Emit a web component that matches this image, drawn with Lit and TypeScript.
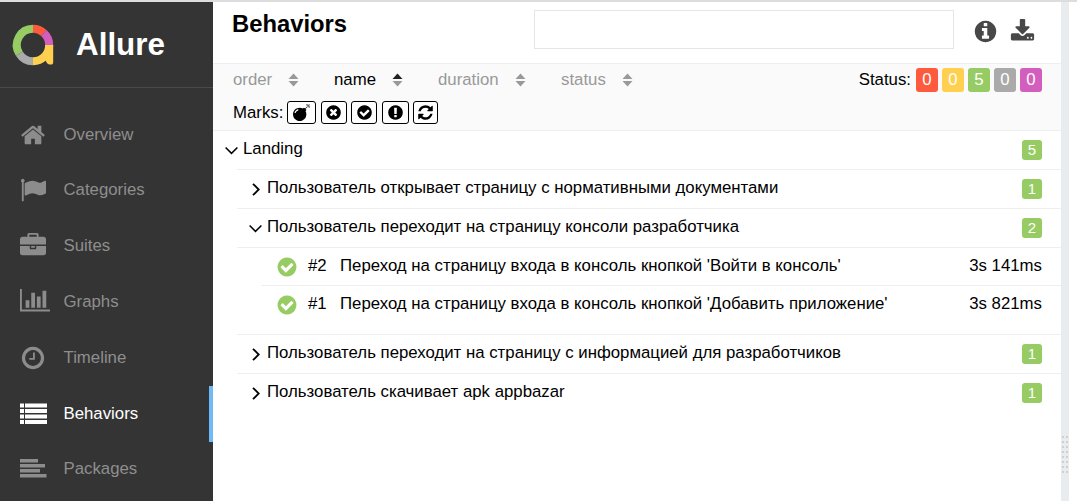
import { LitElement, html, css, svg } from 'lit';
import { customElement } from 'lit/decorators.js';

const FA = {
  home: 'M1472 992v480q0 26-19 45t-45 19h-384v-384h-256v384h-384q-26 0-45-19t-19-45v-480q0-1 .5-3t.5-3l575-474 575 474q1 2 1 6zm223-69l-62 74q-8 9-21 11h-3q-13 0-21-7l-692-577-692 577q-12 8-24 7-13-2-21-11l-62-74q-8-10-7-23.5t11-21.5l719-599q32-26 76-26t76 26l244 204v-195q0-14 9-23t23-9h192q14 0 23 9t9 23v408l219 182q10 8 11 21.5t-7 23.5z',
  flag: 'M320 256q0 72-64 110v1266q0 13-9.5 22.5t-22.5 9.5h-64q-13 0-22.5-9.5t-9.5-22.5v-1266q-64-38-64-110 0-53 37.5-90.5t90.5-37.5 90.5 37.5 37.5 90.5zm1472 64v763q0 25-12.5 38.5t-39.5 27.5q-215 116-369 116-61 0-123.5-22t-108.5-48-115.5-48-142.5-22q-192 0-464 146-17 9-33 9-26 0-45-19t-19-45v-742q0-32 31-55 21-14 79-43 236-120 421-120 107 0 200 29t219 88q38 19 88 19 54 0 117.5-21t110-47 88-47 54.5-21q26 0 45 19t19 45z',
  briefcase: 'M640 256h512v-128h-512v128zm1152 640v480q0 66-47 113t-113 47h-1472q-66 0-113-47t-47-113v-480h672v160q0 26 19 45t45 19h320q26 0 45-19t19-45v-160h672zm-768 0v128h-256v-128h256zm768-480v384h-1792v-384q0-66 47-113t113-47h352v-160q0-40 28-68t68-28h576q40 0 68 28t28 68v160h352q66 0 113 47t47 113z',
  chart: 'M640 896v512h-256v-512h256zm384-512v1024h-256v-1024h256zm1024 1152v128h-2048v-1536h128v1408h1920zm-640-896v768h-256v-768h256zm384-384v1152h-256v-1152h256z',
  clock: 'M1024 544v448q0 14-9 23t-23 9h-320q-14 0-23-9t-9-23v-64q0-14 9-23t23-9h224v-352q0-14 9-23t23-9h64q14 0 23 9t9 23zm416 352q0-148-73-273t-198-198-273-73-273 73-198 198-73 273 73 273 198 198 273 73 273-73 198-198 73-273zm224 0q0 209-103 385.5t-279.5 279.5-385.5 103-385.5-103-279.5-279.5-103-385.5 103-385.5 279.5-279.5 385.5-103 385.5 103 279.5 279.5 103 385.5z',
  info: 'M1152 1376v-160q0-14-9-23t-23-9h-96v-512q0-14-9-23t-23-9h-320q-14 0-23 9t-9 23v160q0 14 9 23t23 9h96v320h-96q-14 0-23 9t-9 23v160q0 14 9 23t23 9h448q14 0 23-9t9-23zm-128-896v-160q0-14-9-23t-23-9h-192q-14 0-23 9t-9 23v160q0 14 9 23t23 9h192q14 0 23-9t9-23zm640 416q0 209-103 385.5t-279.5 279.5-385.5 103-385.5-103-279.5-279.5-103-385.5 103-385.5 279.5-279.5 385.5-103 385.5 103 279.5 279.5 103 385.5z',
  download: 'M1344 1344q0-26-19-45t-45-19-45 19-19 45 19 45 45 19 45-19 19-45zm256 0q0-26-19-45t-45-19-45 19-19 45 19 45 45 19 45-19 19-45zm128-224v320q0 40-28 68t-68 28h-1472q-40 0-68-28t-28-68v-320q0-40 28-68t68-28h465l135 136q58 56 136 56t136-56l136-136h464q40 0 68 28t28 68zm-325-569q17 41-14 70l-448 448q-18 19-45 19t-45-19l-448-448q-31-29-14-70 17-39 59-39h256v-448q0-26 19-45t45-19h256q26 0 45 19t19 45v448h256q42 0 59 39z',
  bomb: 'M571 589q-10-25-34-35t-49 0q-108 44-191 127t-127 191q-10 25 0 49t35 34q13 5 24 5 42 0 60-40 34-84 98.5-148.5t148.5-98.5q25-11 35-35t0-49zm942-356l46 46-244 243 68 68q19 19 19 45.5t-19 45.5l-64 64q89 161 89 343 0 143-55.5 273.5t-150 225-225 150-273.5 55.5-273.5-55.5-225-150-150-225-55.5-273.5 55.5-273.5 150-225 225-150 273.5-55.5q182 0 343 89l64-64q19-19 45.5-19t45.5 19l68 68zm8-56q-10 10-22 10-13 0-23-10l-91-90q-9-10-9-23t9-23q10-9 23-9t23 9l90 91q10 9 10 22.5t-10 22.5zm230 230q-11 9-23 9t-23-9l-90-91q-10-9-10-22.5t10-22.5q9-10 22.5-10t22.5 10l91 90q9 10 9 23t-9 23zm41-183q0 14-9 23t-23 9h-96q-14 0-23-9t-9-23 9-23 23-9h96q14 0 23 9t9 23zm-192-192v96q0 14-9 23t-23 9-23-9-9-23v-96q0-14 9-23t23-9 23 9 9 23zm151 55l-91 90q-10 10-22 10-13 0-23-10-10-9-10-22.5t10-22.5l90-91q10-9 23-9t23 9q9 10 9 23t-9 23z',
  times: 'M1277 1122q0-26-19-45l-181-181 181-181q19-19 19-45 0-27-19-46l-90-90q-19-19-46-19-26 0-45 19l-181 181-181-181q-19-19-45-19-27 0-46 19l-90 90q-19 19-19 46 0 26 19 45l181 181-181 181q-19 19-19 45 0 27 19 46l90 90q19 19 46 19 26 0 45-19l181-181 181 181q19 19 45 19 27 0 46-19l90-90q19-19 19-46zm387-226q0 209-103 385.5t-279.5 279.5-385.5 103-385.5-103-279.5-279.5-103-385.5 103-385.5 279.5-279.5 385.5-103 385.5 103 279.5 279.5 103 385.5z',
  check: 'M1412 734q0-28-18-46l-91-90q-19-19-45-19t-45 19l-408 407-226-226q-19-19-45-19t-45 19l-91 90q-18 18-18 46 0 27 18 45l362 362q19 19 45 19 27 0 46-19l543-543q18-18 18-45zm252 162q0 209-103 385.5t-279.5 279.5-385.5 103-385.5-103-279.5-279.5-103-385.5 103-385.5 279.5-279.5 385.5-103 385.5 103 279.5 279.5 103 385.5z',
  excl: 'M896 128q209 0 385.5 103t279.5 279.5 103 385.5-103 385.5-279.5 279.5-385.5 103-385.5-103-279.5-279.5-103-385.5 103-385.5 279.5-279.5 385.5-103zm128 1247v-190q0-14-9-23.5t-22-9.5h-192q-13 0-23 10t-10 23v190q0 13 10 23t23 10h192q13 0 22-9.5t9-23.5zm-2-344l18-621q0-12-10-18-10-8-24-8h-220q-14 0-24 8-10 6-10 18l17 621q0 10 10 17.5t24 7.5h185q14 0 23.5-7.5t11.5-17.5z',
  refresh: 'M1639 1056q0 5-1 7-64 268-268 434.5t-478 166.5q-146 0-282.5-55t-243.5-157l-129 129q-19 19-45 19t-45-19-19-45v-448q0-26 19-45t45-19h448q26 0 45 19t19 45-19 45l-137 137q71 66 161 102t187 36q134 0 250-65t186-179q11-17 53-117 8-23 30-23h192q13 0 22.5 9.5t9.5 22.5zm25-800v448q0 26-19 45t-45 19h-448q-26 0-45-19t-19-45 19-45l138-138q-148-137-349-137-134 0-250 65t-186 179q-11 17-53 117-8 23-30 23h-199q-13 0-22.5-9.5t-9.5-22.5v-7q65-268 270-434.5t480-166.5q146 0 284 55.5t245 156.5l130-129q19-19 45-19t45 19 19 45z',
  list: 'M0 3.5h4v4H0zM5 3.5h22v4H5zM0 9h4v4H0zM5 9h22v4H5zM0 14.5h4v4H0zM5 14.5h22v4H5zM0 20h4v4H0zM5 20h22v4H5z',
  packages: 'M0 4h18v3.6H0zM0 9h25v3.6H0zM0 14h20v3.6H0zM0 19h26.5v3.6H0z',
};

function icon(d: string, size: number, vb = 1792) {
  return html`<svg class="fa" width=${size} height=${size} viewBox="0 0 ${vb} ${vb}"><path fill="currentColor" d=${d}></path></svg>`;
}

const NAV = [
  { label: 'Overview', d: FA.home, vb: 1792, size: 26 },
  { label: 'Categories', d: FA.flag, vb: 1792, size: 26 },
  { label: 'Suites', d: FA.briefcase, vb: 1792, size: 26 },
  { label: 'Graphs', d: FA.chart, vb: 2048, size: 30 },
  { label: 'Timeline', d: FA.clock, vb: 1792, size: 26 },
  { label: 'Behaviors', d: FA.list, vb: 28, size: 28, active: true },
  { label: 'Packages', d: FA.packages, vb: 28, size: 28 },
];

const SORTS = [
  { label: 'order', w: 101 },
  { label: 'name', w: 104, active: true },
  { label: 'duration', w: 123 },
  { label: 'status', w: 72 },
];

const STATUS = [
  { n: 0, c: '#fd5a3e' },
  { n: 0, c: '#ffd050' },
  { n: 5, c: '#97cc64' },
  { n: 0, c: '#aaaaaa' },
  { n: 0, c: '#d35ebe' },
];

const MARKS = [
  { d: FA.bomb, w: 29 },
  { d: FA.times, w: 26 },
  { d: FA.check, w: 26 },
  { d: FA.excl, w: 27 },
  { d: FA.refresh, w: 25 },
];

const chevDown = html`<svg class="chev" width="13" height="13" viewBox="0 0 13 13"><path d="M0.6 3.5 L6.5 9.4 L12.4 3.5" fill="none" stroke="#000" stroke-width="1.5"></path></svg>`;
const chevRight = html`<svg class="chev" width="13" height="13" viewBox="0 0 13 13"><path d="M4 0.8 L9.7 6.5 L4 12.2" fill="none" stroke="#000" stroke-width="1.8"></path></svg>`;

function ringArc(from: number, to: number, color: string) {
  const r = 16.2;
  const p = (a: number) => {
    const t = ((a - 90) * Math.PI) / 180;
    return `${(33 + r * Math.cos(t)).toFixed(2)} ${(45 + r * Math.sin(t)).toFixed(2)}`;
  };
  return svg`<path d="M${p(from)} A${r} ${r} 0 ${to - from > 180 ? 1 : 0} 1 ${p(to)}" fill="none" stroke=${color} stroke-width="8"></path>`;
}

@customElement('app-root')
export class AppRoot extends LitElement {
  static styles = css`
    :host {
      display: block;
      height: 501px;
      overflow: hidden;
      background: #fff;
      font-family: 'Liberation Sans', Arial, sans-serif;
      font-size: 16.8px;
      color: #000;
    }
    .page {
      display: flex;
      height: 499px;
      border-top: 2px solid #dddddd;
    }
    .fa { display: block; }

    .side {
      width: 213px;
      flex: none;
      background: #343434;
      color: #999;
    }
    .brand {
      display: flex;
      align-items: center;
      height: 85px;
      border-bottom: 1px solid #4a4a4a;
    }
    .logo { display: block; flex: none; }
    .brand-name {
      margin-left: -1px;
      font-size: 31.4px;
      font-weight: bold;
      color: #fff;
    }
    .nav { padding-top: 18.8px; }
    .nav-item {
      display: flex;
      align-items: center;
      height: 55.8px;
      padding-left: 20px;
    }
    .nav-item.active {
      box-shadow: inset -4px 0 0 #6eb9f7;
    }
    .nav-ico {
      width: 32px;
      margin-right: 11.5px;
      flex: none;
      color: #8c8c8c;
    }
    .active .nav-ico { color: #fff; }
    .nav-text { color: #8e8e8e; }
    .active .nav-text { color: #fff; }

    .main { flex: 1; min-width: 0; display: flex; flex-direction: column; }
    .head {
      display: flex;
      height: 61px;
      border-bottom: 1px solid #eeeeee;
      padding-left: 19px;
    }
    h1 {
      margin: 8px 0 0;
      width: 302px;
      font-size: 23.8px;
      line-height: 28px;
      font-weight: bold;
    }
    .search {
      width: 418px;
      height: 37px;
      margin-top: 8px;
      border: 1px solid #e6e6e6;
      flex: none;
    }
    .head-ico { display: flex; margin-left: 19px; margin-top: 17px; gap: 12px; color: #484848; }

    .bar {
      height: 67px;
      border-bottom: 1px solid #eeeeee;
      background: #fafafa;
      padding: 0 19px 0 20px;
      box-sizing: border-box;
    }
    .bar-top { display: flex; height: 31px; align-items: center; justify-content: space-between; }
    .sorts { display: flex; }
    .sort { display: flex; align-items: center; color: #999; }
    .sort.active { color: #000; }
    .updown { display: block; margin-left: 16px; }
    .statuses { display: flex; align-items: center; }
    .status-label { margin-right: 5px; }
    .pill {
      width: 22px;
      height: 24px;
      line-height: 24px;
      margin-left: 4px;
      border-radius: 3px;
      color: #fff;
      text-align: center;
    }
    .status-label + .pill { margin-left: 0; }
    .marks { display: flex; align-items: center; gap: 4.5px; margin-top: 6px; }
    .marks-label { margin-right: -0.5px; }
    .mark {
      display: flex;
      align-items: center;
      justify-content: center;
      box-sizing: border-box;
      height: 23px;
      border: 1px solid #000;
      border-radius: 3px;
      background: #fff;
    }

    .row {
      display: flex;
      align-items: center;
      height: 38px;
      padding-right: 19px;
      border-bottom: 1px solid #eeeeee;
    }
    .row.last { border-bottom: none; }
    .row .grow { flex: 1; }
    .txt { padding-bottom: 2px; }
    .chev { flex: none; display: block; margin-right: 5px; }
    .lvl0, .lvl1 { padding-left: 12px; }
    .kids1 { margin-left: 24px; border-top: 1px solid #eeeeee; }
    .kids2 { padding-bottom: 10px; border-bottom: 1px solid #eeeeee; }
    .kids2 .row { margin-left: 24px; }
    .kids2 .row:first-child { height: 37px; }
    .kids2 .row:last-child { border-bottom: none; }
    .leaf { padding-left: 15px; }
    .ok { color: #97cc64; margin-right: 10px; flex: none; }
    .num { width: 32px; flex: none; }
    .count {
      width: 20px;
      height: 19.5px;
      line-height: 19.5px;
      font-size: 15px;
      text-align: center;
      color: #fff;
      background: #97cc64;
      border-radius: 3px;
    }
    .lvl0.row { border-bottom: none; }

    .gutter {
      position: relative;
      width: 8px;
      flex: none;
      background: #e9ecef;
    }
    .grip {
      position: absolute;
      left: 1px;
      top: 434px;
      width: 6px;
      height: 38px;
      background:
        repeating-linear-gradient(to bottom, #cfcfcf 0 2px, transparent 2px 5px) 0 0 / 2px 100% no-repeat,
        repeating-linear-gradient(to bottom, #cfcfcf 0 2px, transparent 2px 5px) 4px 0 / 2px 100% no-repeat;
    }
    .edge { width: 8px; flex: none; }
  `;

  private renderLeaf(num: string, name: string, time: string) {
    return html`<div class="row leaf">
      <span class="ok">${icon(FA.check, 22)}</span>
      <span class="num txt">${num}</span>
      <span class="grow txt">${name}</span>
      <span class="txt">${time}</span>
    </div>`;
  }

  private renderGroup(name: string, count: number, open: boolean, last = false) {
    return html`<div class="row lvl1 ${last ? 'last' : ''}">
      ${open ? chevDown : chevRight}
      <span class="grow txt">${name}</span>
      <span class="count">${count}</span>
    </div>`;
  }

  render() {
    return html`<div class="page">
      <aside class="side">
        <div class="brand">
          <svg class="logo" width="77" height="85" viewBox="0 2 77 85">
            ${ringArc(0, 42, '#fd5a3e')}
            ${ringArc(42, 90, '#d35ebe')}
            ${ringArc(90, 180, '#ffd050')}
            ${ringArc(180, 238, '#aaaaaa')}
            ${ringArc(238, 360, '#97cc64')}
            <path d="M45.2 45 h8 v17 q0 2.6 -2.5 2.6 h-1 q-2 0 -3.4 -2.6 l-1.6 -3 z" fill="#ffd050"></path>
          </svg>
          <span class="brand-name">Allure</span>
        </div>
        <nav class="nav">
          ${NAV.map(
            (n) => html`<div class="nav-item ${n.active ? 'active' : ''}">
              <span class="nav-ico">${icon(n.d, n.size, n.vb)}</span>
              <span class="nav-text">${n.label}</span>
            </div>`
          )}
        </nav>
      </aside>
      <main class="main">
        <header class="head">
          <h1>Behaviors</h1>
          <div class="search"></div>
          <div class="head-ico">
            ${icon(FA.info, 25)}
            ${icon(FA.download, 25)}
          </div>
        </header>
        <section class="bar">
          <div class="bar-top">
            <div class="sorts">
              ${SORTS.map(
                (s) => html`<div class="sort ${s.active ? 'active' : ''}" style="width:${s.w}px">
                  <span>${s.label}</span>
                  <svg class="updown" width="11" height="14" viewBox="0 0 11 14">
                    <path d="M0.5 6 L5.5 0.5 L10.5 6 Z" fill=${s.active ? '#222' : '#999'}></path>
                    <path d="M0.5 8 L5.5 13.5 L10.5 8 Z" fill="#999"></path>
                  </svg>
                </div>`
              )}
            </div>
            <div class="statuses">
              <span class="status-label">Status:</span>
              ${STATUS.map((s) => html`<span class="pill" style="background:${s.c}">${s.n}</span>`)}
            </div>
          </div>
          <div class="marks">
            <span class="marks-label">Marks:</span>
            ${MARKS.map((m) => html`<span class="mark" style="width:${m.w}px">${icon(m.d, 17)}</span>`)}
          </div>
        </section>
        <section class="tree">
          <div class="row lvl0">
            ${chevDown}
            <span class="grow txt">Landing</span>
            <span class="count">5</span>
          </div>
          <div class="kids1">
            ${this.renderGroup('Пользователь открывает страницу с нормативными документами', 1, false)}
            ${this.renderGroup('Пользователь переходит на страницу консоли разработчика', 2, true)}
            <div class="kids2">
              ${this.renderLeaf('#2', "Переход на страницу входа в консоль кнопкой 'Войти в консоль'", '3s 141ms')}
              ${this.renderLeaf('#1', "Переход на страницу входа в консоль кнопкой 'Добавить приложение'", '3s 821ms')}
            </div>
            ${this.renderGroup('Пользователь переходит на страницу с информацией для разработчиков', 1, false)}
            ${this.renderGroup('Пользователь скачивает apk appbazar', 1, false, true)}
          </div>
        </section>
      </main>
      <div class="gutter"><div class="grip"></div></div>
      <div class="edge"></div>
    </div>`;
  }
}
